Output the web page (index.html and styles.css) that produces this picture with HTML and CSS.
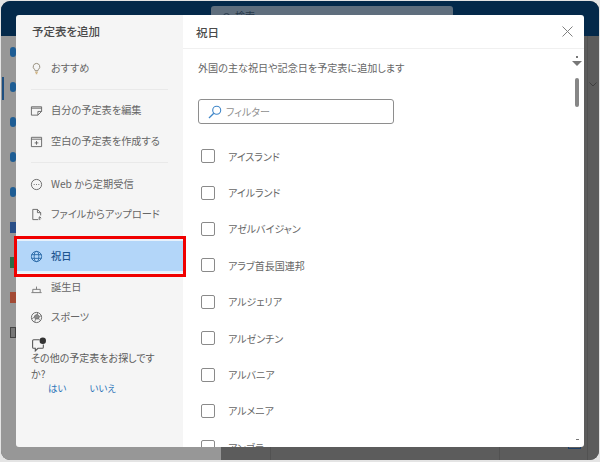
FILE: index.html
```html
<!DOCTYPE html>
<html lang="ja">
<head>
<meta charset="utf-8">
<title>予定表を追加</title>
<link rel="stylesheet" href="styles.css">
</head>
<body>
<div class="app">
  <div class="topbar"><div class="appsearch"><i class="appsearch-ico"></i><span class="appsearch-text">検索</span></div></div>
  <div class="appbody">
    <div class="appside">
      <i class="dot"></i><i class="dot"></i><i class="dot"></i><i class="dot"></i><i class="dot"></i>
      <i class="tile tile-w"></i><i class="tile tile-x"></i><i class="tile tile-p"></i><i class="tile tile-o"></i>
    </div>
    <div class="applist"></div>
    <div class="appmain">
      <div class="cell cell-a"></div>
      <div class="cell cell-b"></div>
      <div class="cell cell-c"><i class="cell-mark"></i></div>
    </div>
    <div class="apprail"><svg class="rail-chev" viewBox="0 0 8 5"><path d="M.5.500L4 4 7.500.500" fill="none" stroke="#3f3f3f" stroke-width="1"/></svg></div>
  </div>
</div>

<div class="modal">
  <aside class="nav">
    <h2 class="nav-title">予定表を追加</h2>
    <a class="nav-item nav-first">
      <svg class="ico" viewBox="0 0 14 14"><path d="M7 1.500a3.600 3.600 0 0 0-2.200 6.400c.5.400.7.900.7 1.500h3c0-.6.200-1.100.7-1.500A3.600 3.600 0 0 0 7 1.500z" fill="none" stroke="#8f8672" stroke-width="1"/><path d="M5.600 11h2.800M6.200 12.600h1.600" fill="none" stroke="#c49a55" stroke-width="1"/></svg>
      おすすめ
    </a>
    <hr class="nav-rule">
    <a class="nav-item">
      <svg class="ico" viewBox="0 0 14 14"><path d="M1.500 3h11v5l-4 4h-7zM1.500 4.500h11M12.500 8h-4v4" fill="none" stroke="#666" stroke-width="1"/></svg>
      自分の予定表を編集
    </a>
    <a class="nav-item nav-nudge">
      <svg class="ico" viewBox="0 0 14 14"><path d="M1.500 2.500h11v10h-11zM1.500 4.500h11M7 6.500v4M5 8.500h4" fill="none" stroke="#666" stroke-width="1"/></svg>
      空白の予定表を作成する
    </a>
    <hr class="nav-rule nav-rule-b">
    <a class="nav-item">
      <svg class="ico" viewBox="0 0 14 14"><circle cx="7" cy="7" r="5.500" fill="none" stroke="#666" stroke-width="1"/><path d="M4 7h1M6.500 7h1M9 7h1" stroke="#666" stroke-width="1"/></svg>
      Web から定期受信
    </a>
    <a class="nav-item">
      <svg class="ico" viewBox="0 0 14 14"><path d="M3 1.500h5l3.500 3.500v3M8 1.500V5h3.500M3 1.500v11h6M10.500 9.500v3.500M9 11l1.500-1.500L12 11" fill="none" stroke="#666" stroke-width="1"/></svg>
      ファイルからアップロード
    </a>
    <div class="nav-current">
      <a class="nav-item nav-active">
        <svg class="ico" viewBox="0 0 14 14"><circle cx="7" cy="7" r="5.500" fill="none" stroke="#2a6aa8" stroke-width="1"/><ellipse cx="7" cy="7" rx="2.500" ry="5.500" fill="none" stroke="#2a6aa8" stroke-width="1"/><path d="M1.500 5h11M1.500 9h11" stroke="#2a6aa8" stroke-width="1"/></svg>
        祝日
      </a>
    </div>
    <a class="nav-item">
      <svg class="ico" viewBox="0 0 14 14"><path d="M3 12V9h8v3M1.500 12.500h11M7 6v3" fill="none" stroke="#777" stroke-width="1"/></svg>
      誕生日
    </a>
    <a class="nav-item">
      <svg class="ico" viewBox="0 0 14 14"><circle cx="7" cy="7" r="5.500" fill="none" stroke="#666" stroke-width="1"/><path d="M5.200 4.800L8 3.500l2.200 2.300-1 2.800H6L4.500 6.800zM1.800 8.500L4.500 6.800M6 8.600l-1 3.400M9.200 8.600l2 1.600M8 3.500V1.500M10.200 5.800l2.300-.8" fill="#8a8a8a" stroke="#666" stroke-width=".8"/></svg>
      スポーツ
    </a>
    <div class="ask">
      <svg class="ask-ico" viewBox="0 0 14 14"><path d="M8 2.500H2.500a1 1 0 0 0-1 1v6a1 1 0 0 0 1 1H4v2.500l2.500-2.500h4a1 1 0 0 0 1-1V7" fill="none" stroke="#555" stroke-width="1"/><circle cx="11" cy="3.500" r="3" fill="#333"/></svg>
      <p class="ask-text">その他の予定表をお探しですか?</p>
      <div class="ask-links"><a>はい</a><a>いいえ</a></div>
    </div>
  </aside>

  <section class="content">
    <header class="content-head">
      <h2 class="content-title">祝日</h2>
      <svg class="close" viewBox="0 0 11 11"><path d="M.5.500l10 10M10.500.500l-10 10" stroke="#808080" stroke-width="1"/></svg>
    </header>
    <div class="scroller">
      <p class="lead">外国の主な祝日や記念日を予定表に追加します</p>
      <div class="filter">
        <svg class="filter-ico" viewBox="0 0 14 14"><circle cx="8.700" cy="5.300" r="4" fill="none" stroke="#3f86c8" stroke-width="1.100"/><path d="M5.800 8.200L1 13" stroke="#3f86c8" stroke-width="1.300"/></svg>
        <span>フィルター</span>
      </div>
      <ul class="countries">
        <li><i class="check"></i>アイスランド</li>
        <li><i class="check"></i>アイルランド</li>
        <li><i class="check"></i>アゼルバイジャン</li>
        <li><i class="check"></i>アラブ首長国連邦</li>
        <li><i class="check"></i>アルジェリア</li>
        <li><i class="check"></i>アルゼンチン</li>
        <li><i class="check"></i>アルバニア</li>
        <li><i class="check"></i>アルメニア</li>
        <li><i class="check"></i>アンゴラ</li>
      </ul>
      <div class="scroll-ui">
        <i class="scroll-up"></i>
        <i class="scroll-arrow"></i>
        <i class="scroll-thumb"></i>
        <i class="scroll-down"></i>
      </div>
    </div>
  </section>
</div>
</body>
</html>
```

FILE: styles.css
```css
* { box-sizing: border-box; }
html, body { margin: 0; height: 100%; background: #e4e4e4; overflow: hidden; }
body {
  font-family: "Noto Sans CJK JP", "Noto Sans", sans-serif;
  font-feature-settings: "palt";
  font-size: 10px;
  color: #666;
  padding: 1px;
}
.app {
  width: 598px; height: 459px;
  border-radius: 9px; overflow: hidden;
  display: flex; flex-direction: column;
  background: #5c5c5c;
}
.topbar { height: 35px; background: #04294a; padding-top: 5px; padding-left: 210px; flex: none; }
.appsearch { width: 242px; height: 20px; background: #5f6e7d; border-radius: 3px; padding-left: 12px; color: #26384a; display: flex; align-items: center; gap: 5px; }
.appsearch-ico { width: 7px; height: 7px; border: 1px solid #26384a; border-radius: 50%; }
.appsearch-text { line-height: 20px; }
.appbody { flex: 1; display: flex; }
.appside {
  width: 15px; background: #979797; flex: none;
  display: flex; flex-direction: column; padding-top: 11px; position: relative;
}
.appside::before {
  content: ""; position: absolute; left: 1px; top: 41px; width: 2px; height: 23px; background: #1e4f80;
}
.dot { width: 6px; height: 10px; margin-left: 9px; margin-bottom: 25px; background: #1e5d94; border-radius: 4px; flex: none; }
.tile { width: 6px; height: 11px; margin-left: 9px; margin-bottom: 24px; flex: none; background: #2a4f88; }
.tile-x { background: #2c6b46; }
.tile-p { background: #a34a35; }
.tile-o { background: #777; border: 1px solid #444; }
.applist { width: 205px; background: #979797; flex: none; }
.appmain { flex: 1; background: #5c5c5c; display: flex; }
.cell { height: 100%; border-right: 1px solid #525252; flex: none; }
.cell-a { width: 50px; }
.cell-b { width: 229px; }
.cell-c { flex: 1; border-right: 0; display: flex; align-items: flex-end; padding: 0 0 11px 68px; }
.cell-mark { width: 13px; height: 5px; border: 1px solid #1f3f66; border-top: 0; }
.apprail { width: 12px; flex: none; border-left: 1px solid #525252; padding: 46px 0 0 1px; background: #5c5c5c; }
.rail-chev { display: block; width: 8px; height: 5px; }

.modal {
  position: absolute; left: 16px; top: 15px;
  width: 568px; height: 432px;
  display: flex;
}
.nav { width: 167px; flex: none; background: #f5f5f5; border-radius: 3px 0 0 3px; padding-top: 8px; display: flex; flex-direction: column; }
.nav-title { margin: 0 0 12px 16px; font-size: 11.500px; font-weight: 500; line-height: 17px; color: #4a4a4a; height: 17px; }
.nav-item {
  display: flex; align-items: center; gap: 8px;
  height: 30px; padding-left: 14px; color: #666; line-height: 30px; flex: none; white-space: nowrap;
  font-size: 10.200px;
}
.nav-first { margin-top: 1px; }
.nav-nudge { margin-top: 1px; }
.ico { width: 13px; height: 13px; flex: none; }
.nav-rule { border: 0; border-top: 1px solid #e9e9e9; margin: 6px 0 5px 15px; width: 137px; flex: none; }
.nav-rule-b { margin-bottom: 6px; }
.nav-current {
  position: relative; height: 34px; margin: 10px 0 -1px; flex: none;
  background: #b3d6f9;
  box-shadow: inset 0 2px 0 #e6f1fc, inset 0 -2px 0 #e6f1fc;
}
.nav-current::after {
  content: ""; position: absolute; left: -2px; top: -3px; right: -3px; bottom: -4px;
  border: 3px solid #f00000; pointer-events: none;
}
.nav-active { height: 34px; color: #1f5590; font-weight: 500; }
.ask { padding: 5px 16px 0 15px; flex: none; }
.ask-ico { display: block; width: 15px; height: 15px; margin-bottom: -2px; }
.ask-text { margin: 0; line-height: 16px; color: #5c5c5c; width: 128px; }
.ask-links { display: flex; gap: 23px; padding-left: 17px; margin-top: -1px; line-height: 14px; color: #2b74b8; font-size: 9.500px; }

.content { flex: 1; min-width: 0; display: flex; flex-direction: column; background: #fff; border-radius: 0 3px 3px 0; }
.content-head { height: 34px; flex: none; border-bottom: 1px solid #f0f0f0; padding: 0 11px 0 13px; display: flex; align-items: center; justify-content: space-between; }
.content-title { margin: 0; font-size: 11.500px; font-weight: 500; color: #4a4a4a; }
.close { width: 11px; height: 11px; }
.scroller { flex: 1; position: relative; overflow: hidden; padding: 9px 0 0 15px; }
.lead { margin: 0 0 21px; line-height: 20px; font-size: 10.100px; }
.filter {
  width: 196px; height: 25px; border: 1px solid #8e8e8e; border-radius: 3px;
  display: flex; align-items: center; gap: 4px; padding-left: 9px; color: #8f8f8f;
}
.filter-ico { width: 14px; height: 14px; }
.countries { list-style: none; margin: 15px 0 0 3px; padding: 0; }
.countries li { height: 36.400px; display: flex; align-items: center; gap: 13px; padding-bottom: 2px; color: #666; }
.check { width: 14px; height: 14px; border: 1px solid #8a8a8a; border-radius: 2px; background: #fff; flex: none; }
.scroll-ui { position: absolute; left: 388px; top: 7px; bottom: 0; width: 12px; display: flex; flex-direction: column; align-items: center; }
.scroll-up { width: 2px; height: 2px; background: #777; flex: none; }
.scroll-arrow { width: 0; height: 0; border-left: 5px solid transparent; border-right: 5px solid transparent; border-top: 5px solid #777; margin-top: 3px; flex: none; }
.scroll-thumb { width: 4px; height: 29px; margin-top: 12px; background: #868686; border-radius: 2px; flex: none; }
.scroll-down { width: 3px; height: 1.500px; background: #777; margin-top: auto; margin-bottom: 7px; flex: none; }
```
